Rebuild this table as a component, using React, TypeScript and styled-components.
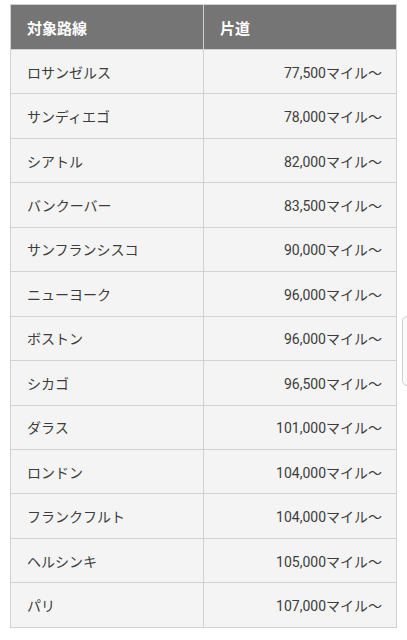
import React from "react";
import styled, { createGlobalStyle } from "styled-components";

const GlobalStyle = createGlobalStyle`
  html, body {
    margin: 0;
    padding: 0;
    background: #ffffff;
  }
  body {
    font-family: Roboto, "Noto Sans CJK JP", sans-serif;
  }
`;

const Page = styled.div`
  position: relative;
  width: 407px;
  height: 640px;
  padding: 4px 10px 0 10px;
  box-sizing: border-box;
  overflow: hidden;
`;

const Table = styled.table`
  width: 387px;
  border-collapse: collapse;
  border: 1px solid #d2d2d2;
  table-layout: fixed;
`;

const HeadCell = styled.th`
  height: 45px;
  padding: 0 0 0 16px;
  background: #757575;
  color: #ffffff;
  font-size: 15px;
  font-weight: 700;
  text-align: left;
  border: 1px solid #d2d2d2;
  box-sizing: border-box;
  &:first-child { width: 193px; }
`;

const Row = styled.tr`
  height: 44.45px;
  background: #f4f4f4;
`;

const Cell = styled.td<{ $right?: boolean }>`
  padding: ${(p) => (p.$right ? "0 14px 0 0" : "0 0 0 16px")};
  text-align: ${(p) => (p.$right ? "right" : "left")};
  color: #3c3c3c;
  font-size: 14px;
  border: 1px solid #d2d2d2;
  box-sizing: border-box;
`;

const ScrollHint = styled.div`
  position: absolute;
  left: 402px;
  top: 316px;
  width: 10px;
  height: 68px;
  border: 1px solid #cfcfcf;
  border-radius: 5px;
  background: #fafafa;
`;

const routes: [string, string][] = [
  ["ロサンゼルス", "77,500"],
  ["サンディエゴ", "78,000"],
  ["シアトル", "82,000"],
  ["バンクーバー", "83,500"],
  ["サンフランシスコ", "90,000"],
  ["ニューヨーク", "96,000"],
  ["ボストン", "96,000"],
  ["シカゴ", "96,500"],
  ["ダラス", "101,000"],
  ["ロンドン", "104,000"],
  ["フランクフルト", "104,000"],
  ["ヘルシンキ", "105,000"],
  ["パリ", "107,000"],
];

function App() {
  return (
    <>
      <GlobalStyle />
      <Page>
        <Table>
          <thead>
            <tr>
              <HeadCell>対象路線</HeadCell>
              <HeadCell>片道</HeadCell>
            </tr>
          </thead>
          <tbody>
            {routes.map(([city, miles]) => (
              <Row key={city}>
                <Cell>{city}</Cell>
                <Cell $right>{miles}マイル〜</Cell>
              </Row>
            ))}
          </tbody>
        </Table>
        <ScrollHint />
      </Page>
    </>
  );
}

export default App;
